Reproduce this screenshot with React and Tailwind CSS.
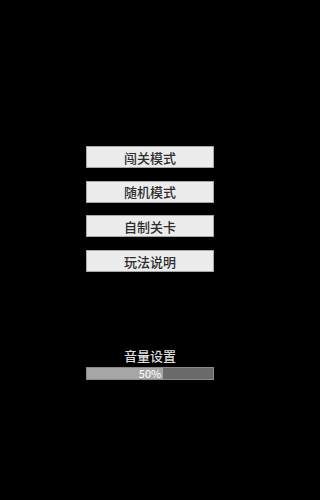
export default function App() {
  const items = ["闯关模式", "随机模式", "自制关卡", "玩法说明"];
  return (
    <div className="w-full min-h-[500px] bg-black">
      <div
        className="w-[300px] h-[500px] bg-black flex flex-col items-center pt-[146px]"
        style={{ fontFamily: '"Noto Sans CJK SC", "Noto Sans", sans-serif' }}
      >
        <div className="flex flex-col gap-[12.7px] w-[128px]">
          {items.map((t) => (
            <div
              key={t}
              className="h-[22px] bg-[#ececec] border border-[#a8a8a8] flex items-center justify-center text-[13px] font-medium leading-none text-[#2e2e2e]"
            >
              {t}
            </div>
          ))}
        </div>
        <div className="mt-[77px] text-[13px] font-medium leading-none text-[#dedede]">音量设置</div>
        <div className="mt-[5px] w-[128px] h-[13px] bg-[#6a6a6a] border border-[#8a8a8a] relative flex">
          <div className="w-[60%] h-full bg-[#a6a6a6]" />
          <div className="absolute inset-0 flex items-center justify-center text-[11px] leading-none text-white">
            50%
          </div>
        </div>
      </div>
    </div>
  );
}
